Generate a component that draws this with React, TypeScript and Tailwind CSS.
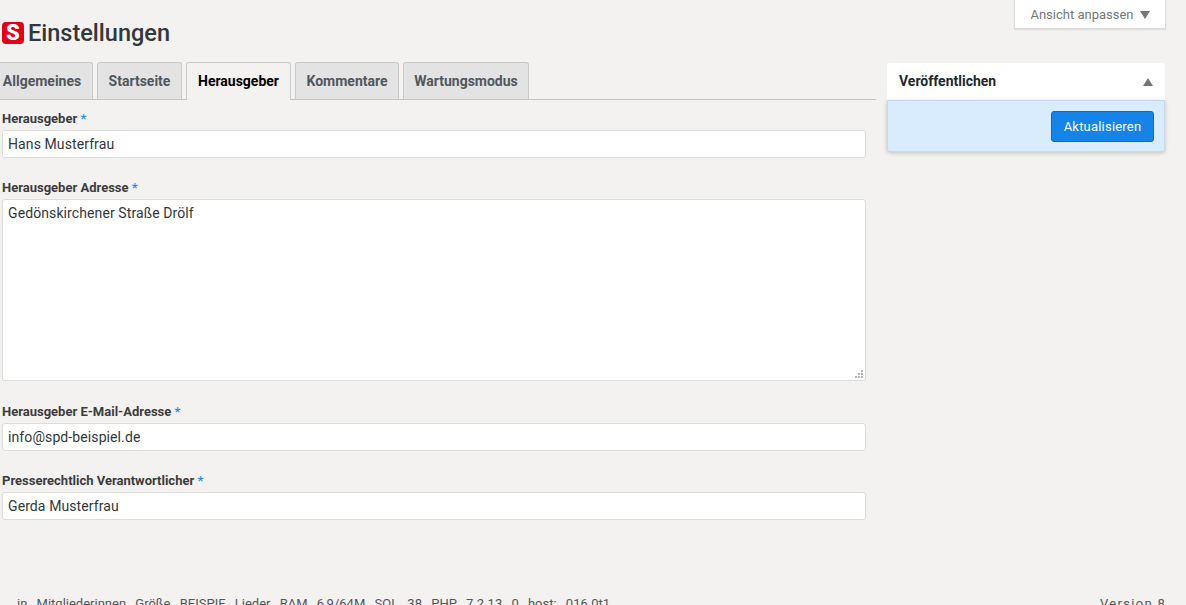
const tabs = [
  { label: "Allgemeines", width: "w-[102px] -ml-[9px]" },
  { label: "Startseite", width: "w-[85px]" },
  { label: "Herausgeber", width: "w-[105px]", active: true },
  { label: "Kommentare", width: "w-[104px]" },
  { label: "Wartungsmodus", width: "w-[126px]" },
];

const inputClass =
  "block w-full rounded-[3px] border border-[#dddcdb] bg-white px-[5px] text-[14px] tracking-[0.1px] text-[#32373c] outline-none";

const Label = ({ text }: { text: string }) => (
  <div className="h-[21px] pt-px text-[13px] font-bold leading-[18px] text-[#3c3c3c]">
    {text} <span className="text-[#2f8fe8]">*</span>
  </div>
);

const Field = ({
  label,
  value,
  className,
}: {
  label: string;
  value: string;
  className: string;
}) => (
  <div className={className}>
    <Label text={label} />
    <input readOnly value={value} className={`${inputClass} h-[28px]`} />
  </div>
);

export default function App() {
  return (
    <div className="h-screen overflow-hidden bg-[#f3f2f1] font-['Roboto',sans-serif] text-[#32373c]">
      <div className="flex h-[62px] items-start justify-between pr-[20px]">
        <div className="flex items-center gap-[4px] pl-[2px] pt-[17px]">
          <div className="flex h-[22px] w-[22px] items-center justify-center rounded-[4px] bg-[#e3001b] text-[22px] font-black leading-none text-white">
            S
          </div>
          <h1 className="text-[23.5px] font-medium leading-[32px] text-[#32373c]">
            Einstellungen
          </h1>
        </div>
        <div className="flex h-[29px] w-[152px] items-center justify-center gap-[6px] border border-t-0 border-[#dddcdb] bg-white pt-px text-[13px] text-[#72777c] shadow-[0_1px_1px_rgba(0,0,0,0.08)]">
          Ansicht anpassen
          <svg width="10" height="8" viewBox="0 0 10 8">
            <path d="M0 0h10L5 8z" fill="#72777c" />
          </svg>
        </div>
      </div>

      <div className="flex">
        <div className="w-[876px] shrink-0">
          <div className="flex h-[38px] items-end gap-[4px] border-b border-[#c3c4c7]">
            {tabs.map((tab) =>
              tab.active ? (
                <div
                  key={tab.label}
                  className={`${tab.width} -mb-px flex h-[38px] items-center justify-center rounded-t-[3px] border border-b-0 border-[#c9c9c9] bg-[#f3f2f1] text-[14px] font-bold text-black`}
                >
                  {tab.label}
                </div>
              ) : (
                <div
                  key={tab.label}
                  className={`${tab.width} flex h-[37px] items-center justify-center rounded-t-[3px] border border-b-0 border-[#c9c9c9] bg-[#e3e3e3] text-[14px] font-bold text-[#50575e]`}
                >
                  {tab.label}
                </div>
              )
            )}
          </div>

          <div className="w-[866px] pl-[2px]">
            <Field className="pt-[9px]" label="Herausgeber" value="Hans Musterfrau" />
            <div className="pt-[20px]">
              <Label text="Herausgeber Adresse" />
              <div className="relative">
                <textarea
                  readOnly
                  value="Gedönskirchener Straße Drölf"
                  className={`${inputClass} h-[182px] resize-none py-[3px]`}
                />
                <svg
                  className="absolute bottom-[3px] right-[3px]"
                  width="8"
                  height="8"
                  viewBox="0 0 8 8"
                >
                  <path d="M6 0h2v2H6zM3 3h2v2H3zM6 3h2v2H6zM0 6h2v2H0zM3 6h2v2H3zM6 6h2v2H6z" fill="#b5b5b5" />
                </svg>
              </div>
            </div>
            <Field className="pt-[21px]" label="Herausgeber E-Mail-Adresse" value="info@spd-beispiel.de" />
            <Field className="pt-[20px]" label="Presserechtlich Verantwortlicher" value="Gerda Musterfrau" />
          </div>
        </div>

        <div className="ml-[11px] mt-px w-[278px]">
          <div className="flex h-[37px] items-center justify-between rounded-t-[3px] bg-white pl-[12px] pr-[12px] text-[14px] font-bold text-[#23282d]">
            Veröffentlichen
            <svg width="10" height="8" viewBox="0 0 10 8">
              <path d="M0 8h10L5 0z" fill="#72777c" />
            </svg>
          </div>
          <div className="flex h-[52px] items-start justify-end rounded-b-[3px] border border-[#c5d9ea] bg-[#d9ecfd] pr-[10px] pt-[10px] shadow-[0_1px_4px_rgba(0,0,0,0.2)]">
            <button className="h-[31px] w-[103px] rounded-[3px] border border-[#0f6cb8] bg-[#1584e8] text-[13px] tracking-[0.2px] text-white">
              Aktualisieren
            </button>
          </div>
        </div>
      </div>

      <div className="mt-[75px] flex justify-between pl-[17px] pr-[20px] text-[13px] leading-[18px] text-[#50575e]">
        <span className="[word-spacing:6px]">
          in Mitgliederinnen Größe BEISPIE Lieder RAM 6,9/64M SQL 38 PHP 7.2.13 0 host: 016.0t1
        </span>
        <span className="tracking-[1.3px]">Version 8</span>
      </div>
    </div>
  );
}
